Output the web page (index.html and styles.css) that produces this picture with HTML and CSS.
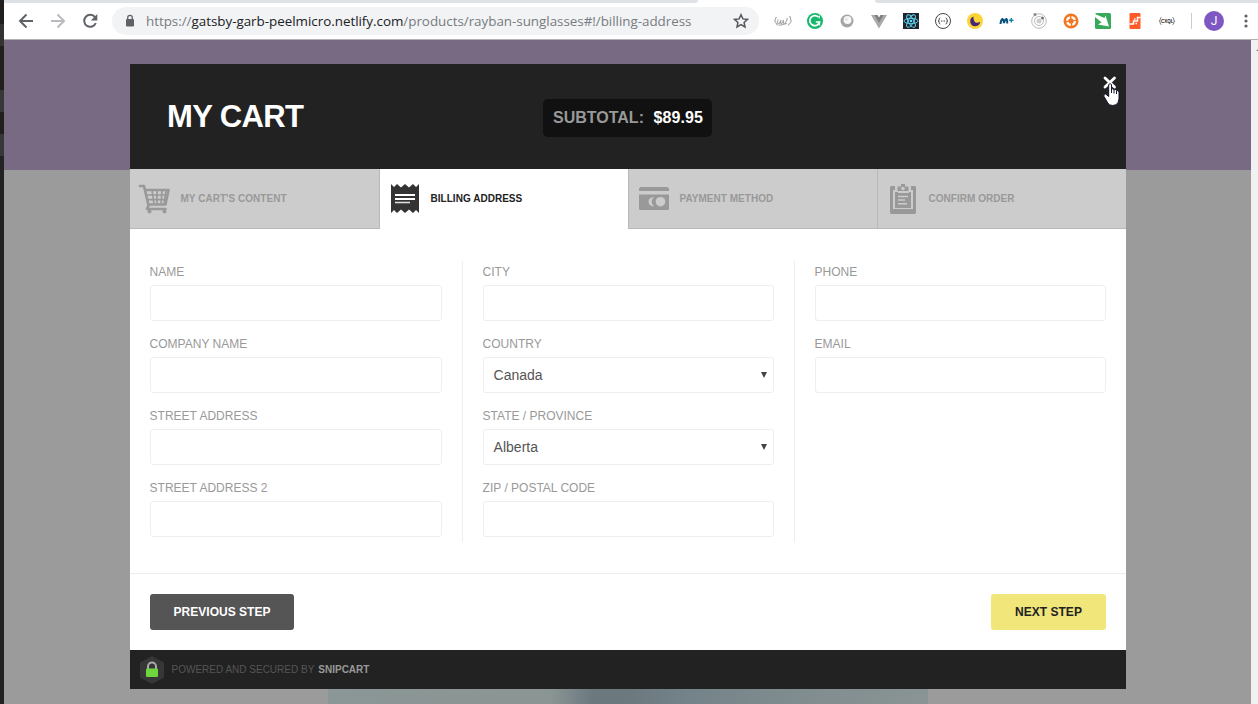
FILE: index.html
```html
<!DOCTYPE html>
<html lang="en">
<head>
<meta charset="utf-8">
<title>Billing address</title>
<link rel="stylesheet" href="styles.css">
</head>
<body>
<div class="screen">
  <div class="desktop-edge"></div>
  <div class="browser">
    <div class="tabstrip"><div class="tab-rest left"></div><div class="tab-rest right"></div></div>
    <div class="toolbar">
      <svg class="nav" width="108" height="36" viewBox="4 3 108 36" fill="none" stroke="#5f6368" stroke-width="2">
        <path d="M33 21H20.500M26.500 14.500L20 21l6.500 6.500"/>
        <path stroke="#b9bbbe" d="M51 21h12.500M57.500 14.500L64 21l-6.500 6.500"/>
        <path d="M95 17.200A6 6 0 1 0 95.800 23"/><path fill="#5f6368" stroke="none" d="M97.300 14v6.500h-6.500z"/>
      </svg>
      <div class="address">
        <svg width="10" height="14" viewBox="0 0 10 14"><rect x="1" y="5" width="8" height="7.500" rx="1" fill="#5f6368"/><path d="M2.700 5.500V3.700a2.300 2.300 0 0 1 4.600 0v1.800" fill="none" stroke="#5f6368" stroke-width="1.300"/></svg>
        <div class="url">https://<span class="host">gatsby-garb-peelmicro.netlify.com</span>/products/rayban-sunglasses#!/billing-address</div>
        <svg class="star" width="16" height="16" viewBox="0 0 16 16"><path d="M8 1.700l1.900 4.200 4.600.5-3.400 3.100.9 4.500L8 11.700 4 14l.9-4.500L1.500 6.400l4.600-.5z" fill="none" stroke="#55595e" stroke-width="1.500"/></svg>
      </div>
      <div class="extensions">
        <svg viewBox="0 0 20 20"><g fill="none" stroke="#aaa" stroke-width="1.100"><path d="M4 6.500q-2 0-1.600 2l-.7 1.500 1.100 1.500 1.700 3M16 5.500q2 0 1.500 2.500l.8 2-1.300 2-2 2.500M5 8.500q-1 5 1 4.500l2-4q-1 4 .5 4l2-4q-.5 4 1 4l2-3 1-3M6 14.500l8-2"/></g></svg>
        <svg viewBox="0 0 20 20"><circle cx="10" cy="10" r="8" fill="#15b76c"/><path d="M13.500 6.300A5 5 0 1 0 14.600 11H10.800" fill="none" stroke="#fff" stroke-width="1.700"/><path d="M14.600 10.500v4M14.300 4.500v3" stroke="#fff" stroke-width="1"/></svg>
        <svg viewBox="0 0 20 20"><circle cx="10" cy="10" r="6.500" fill="#a5a5a5"/><circle cx="10.500" cy="9" r="4" fill="#f8f8f8"/><circle cx="9.300" cy="8.200" r="1.600" fill="#e5e5e5"/></svg>
        <svg viewBox="0 0 20 20"><path d="M2 4h4.500L10 10l3.500-6H18l-8 13.500z" fill="#aaa"/><path d="M5.500 4h3L10 6.500 11.500 4h3L10 12z" fill="#808080"/></svg>
        <svg viewBox="0 0 20 20"><path fill="#20232a" d="M2 2h16v16H2z"/><g fill="none" stroke="#61dafb" stroke-width=".9"><ellipse cx="10" cy="10" rx="7" ry="2.700"/><ellipse cx="10" cy="10" rx="7" ry="2.700" transform="rotate(60 10 10)"/><ellipse cx="10" cy="10" rx="7" ry="2.700" transform="rotate(120 10 10)"/></g><circle cx="10" cy="10" r="1.300" fill="#61dafb"/></svg>
        <svg viewBox="0 0 20 20"><g fill="none" stroke="#444"><circle cx="10" cy="10" r="7.500"/><path d="M7.300 7q-1.300 0-1.100 1.500T5.100 10q1.300 0 1.100 1.500T7.300 13M12.700 7q1.300 0 1.100 1.500t1.100 1.500q-1.300 0-1.100 1.500T12.700 13"/><path d="M8 10h4" stroke-dasharray="1 .5"/></g></svg>
        <svg viewBox="0 0 20 20"><circle cx="10" cy="10" r="8" fill="#fcd535"/><path d="M8.500 5.500a5 5 0 1 0 6.700 5.300q-4 2.200-5.700-.3-1.500-2.200-1-5z" fill="#442779"/></svg>
        <svg viewBox="0 0 20 20"><path d="M3.500 13q.5-4.500 2-5 1 .5 1.500 4 1-3.800 2.500-4 1 1 .7 4.500" fill="none" stroke="#075078" stroke-width="2"/><path d="M12 9.200h4.500M14.300 7v4.400" stroke="#1687b8" stroke-width="1.400"/></svg>
        <svg viewBox="0 0 20 20"><g fill="none" stroke="#bbb"><circle cx="10" cy="10" r="7.300"/><circle cx="10" cy="10" r="4.500"/></g><circle cx="10" cy="10" r="2.500" fill="#ccc"/><circle cx="6" cy="3.500" r="1.500" fill="#888"/><circle cx="13.500" cy="7" r="1.500" fill="#777"/></svg>
        <svg viewBox="0 0 20 20"><circle cx="10" cy="10" r="7.500" fill="#f47720"/><circle cx="10" cy="10" r="3.900" fill="none" stroke="#fff" stroke-width="2.200" stroke-dasharray="4.600 1.520"/><circle cx="10" cy="10" r="1.800" fill="#f47720"/></svg>
        <svg viewBox="0 0 20 20"><rect x="2" y="2" width="16" height="16" rx="1.500" fill="#37a95b"/><path d="M2 3l9.500 4 1-2.500L16 15.500 5 13.500l3.500-2.200L2 6z" fill="#fff"/></svg>
        <svg viewBox="0 0 20 20"><rect x="4.500" y="2" width="11" height="16" rx="1" fill="#ff5a28"/><path d="M4.500 13h4v-3h4V6.500h3M9 8h1.500M10.500 12.500H12" fill="none" stroke="#fff" stroke-width="1.500"/></svg>
        <svg viewBox="0 0 20 20"><g fill="none" stroke="#777" stroke-width=".9"><path d="M4.500 6.500q-1.500 0-1.200 1.700T2 10q1.500 0 1.200 1.700t1.300 1.800M15.500 6.500q1.500 0 1.200 1.700T18 10q-1.500 0-1.200 1.700t-1.300 1.800"/></g><text class="cxl" x="4" y="11.700">CXQL</text></svg>
      </div>
      <div class="separator"></div>
      <div class="avatar">J</div>
      <svg class="dots" width="4" height="16" viewBox="0 0 4 16" fill="#5f6368"><circle cx="2" cy="3" r="1.600"/><circle cx="2" cy="8" r="1.600"/><circle cx="2" cy="13" r="1.600"/></svg>
    </div>
    <div class="viewport">
      <div class="page">
        <div class="hero"></div>
        <div class="product-photo"></div>
      </div>
      <div class="scrollbar"><svg width="7" height="20" viewBox="0 0 7 20"><path d="M5 11l4-4v4z" fill="#888"/></svg></div>
      <div class="cart">
        <header class="cart-header">
          <h1>MY CART</h1>
          <div class="subtotal"><span>SUBTOTAL:</span><b>$89.95</b></div>
        </header>
        <svg class="close" width="20" height="34" viewBox="0 0 20 34">
          <path d="M4 4l9.500 9M13.500 4l-9.500 9" stroke="#fff" stroke-width="2.800" stroke-linecap="round"/>
          <path d="M7.700 10.500q1.500-1.700 2.800 0V15q1.600-.8 2.500.7 1.800-.8 2.500.9 2-.5 2.500 1.400V25l-1 3.500q-1.500 3-5.200 3t-5-2.500L3 22.500q-1-3 1.700-2.500l3 2.500z" fill="#fff" stroke="#15152b"/>
          <path d="M10.500 15v4M13 16v3.500M15.500 17v3" stroke="#15152b" stroke-width="1"/>
        </svg>
        <nav class="steps">
          <div class="step">
            <svg width="36" height="36" viewBox="0 0 36 36"><g fill="none" stroke="#999" stroke-width="2.600" stroke-linecap="round" stroke-linejoin="round"><path d="M2 5h4l4.500 19.500M8 9h22.500l-3 14.500H11L9 28h18.500"/></g><path d="M9 14h20M10 18.700h18M14 9l2 14M19 9v14M24 9l-1 14M28 10l-2 13" stroke="#999" stroke-width="1.700"/><circle cx="11.500" cy="30.500" r="2" fill="#999"/><circle cx="26.500" cy="30.500" r="2" fill="#999"/></svg>
            <span>MY CART'S CONTENT</span>
          </div>
          <div class="step active">
            <svg width="36" height="36" viewBox="0 0 36 36"><path d="M4 3l3 3 3-3 4 3.500L18 3l4 3.500L26 3l3 3 3-3v29l-3-3-3 3-4-3.500L18 32l-4-3.500L10 32l-3-3-3 3z" fill="#333"/><path d="M8 14h20M8 18h20" stroke="#fff" stroke-width="2"/><path d="M8 21.500h15" stroke="#ddd" stroke-width="1.600"/></svg>
            <span>BILLING ADDRESS</span>
          </div>
          <div class="step">
            <svg width="36" height="36" viewBox="0 0 36 36"><path d="M2 10V7.500L3.500 6h27L32 7.500V10zM2 13.500h30V28l-1 1H3l-1-1z" fill="#999"/><path d="M17 16q-5.500.5-5.500 4.700 0 4 5.500 4.700-2.300-2-2.300-4.700T17 16" fill="#ccc"/><circle cx="23.500" cy="20.700" r="4.800" fill="#ccc"/></svg>
            <span>PAYMENT METHOD</span>
          </div>
          <div class="step">
            <svg width="36" height="36" viewBox="0 0 36 36"><path d="M5 5h4v4H7v19h20V9h-2V5h4l1 1v26l-1 1H5l-1-1V6z" fill="#999"/><path d="M9 11h3v1h11v-1h2v16H9z" fill="#999"/><path d="M11.500 10V5.500h3.500V3h4v2.500h3.500V10z" fill="#999"/><circle cx="17" cy="7.500" r="1.800" fill="#ccc"/><path d="M12 15.500h10M12 19h7M12 22.700h9" stroke="#ccc" stroke-width="1.500"/></svg>
            <span>CONFIRM ORDER</span>
          </div>
        </nav>
        <div class="form">
          <div class="column">
            <label>NAME<input type="text"></label>
            <label>COMPANY NAME<input type="text"></label>
            <label>STREET ADDRESS<input type="text"></label>
            <label>STREET ADDRESS 2<input type="text"></label>
          </div>
          <div class="column">
            <label>CITY<input type="text"></label>
            <div class="field">COUNTRY<div class="select"><span>Canada</span><i></i></div></div>
            <div class="field">STATE / PROVINCE<div class="select"><span>Alberta</span><i></i></div></div>
            <label>ZIP / POSTAL CODE<input type="text"></label>
          </div>
          <div class="column">
            <label>PHONE<input type="text"></label>
            <label>EMAIL<input type="text"></label>
          </div>
        </div>
        <div class="actions"><button class="previous">PREVIOUS STEP</button><button class="next">NEXT STEP</button></div>
        <footer class="secured">
          <svg width="26" height="28" viewBox="0 0 26 28"><path d="M13 0l12 6.500v15L13 28 1 21.500v-15z" fill="#373737"/><path d="M9 13V10.500a4 4 0 0 1 8 0V13" fill="none" stroke="#aaa" stroke-width="2"/><rect x="7" y="12.500" width="12" height="8.500" rx="1" fill="#70d63e"/></svg>
          <span>POWERED AND SECURED BY</span><b>SNIPCART</b>
        </footer>
      </div>
    </div>
  </div>
</div>
</body>
</html>
```
FILE: styles.css
```css
* { box-sizing: border-box; }
body { margin: 0; font-family: "Liberation Sans", Arial, sans-serif; }
.screen { display: flex; width: 1258px; height: 704px; overflow: hidden; }
.desktop-edge { width: 4px; background: linear-gradient(#211f1e 24px, #343332 24px 46px, #211f1e 46px 90px, #383737 90px 112px, #211f1e 112px 134px, #383737 134px 156px, #222 156px); }
.browser { width: 1254px; }
.tabstrip { display: flex; justify-content: space-between; height: 3px; background: #fff; }
.tab-rest { height: 3px; background: #dee1e6; }
.tab-rest.left { width: 694px; border-bottom-right-radius: 3px; }
.tab-rest.right { width: 383px; border-bottom-left-radius: 3px; }
.toolbar { display: flex; align-items: center; height: 37px; background: #fff; border-bottom: 1px solid #b3b1b5; }
.nav { display: block; flex: none; }
.address { display: flex; align-items: center; width: 647px; height: 28px; padding: 0 10px 0 13px; border-radius: 14px; background: #f1f3f4; }
.url { margin-left: 11px; flex: 1; white-space: nowrap; font: 13.4px/20px "Open Sans", sans-serif; letter-spacing: -.02px; color: #787b80; }
.host { color: #202124; }
.extensions { display: flex; gap: 12px; margin-left: 14px; }
.extensions svg { display: block; width: 20px; height: 20px; }
.cxl { font: bold 4.5px "Liberation Sans", sans-serif; fill: #222; }
.separator { width: 1px; height: 16px; margin-left: 14px; background: #ccc; }
.avatar { width: 20px; height: 20px; margin-left: 12px; border-radius: 50%; background: #7e57c2; color: #fff; font: 12px/20px Roboto, sans-serif; text-align: center; }
.dots { margin-left: 20px; }
.viewport { position: relative; display: flex; height: 664px; }
.page { width: 1247px; background: #9b9b9b; }
.hero { height: 130px; background: #786a82; }
.product-photo { width: 600px; height: 415px; margin: 119px 0 0 324px; background: linear-gradient(90deg, #8b9696, #8b9594 37%, #6b797f 44%, #6b797f 50%, #748389 60%, #7e8b8e 75%, #8a9494); }
.scrollbar { width: 7px; background: #f1f1f1; }
.cart { position: absolute; left: 126px; top: 24px; width: 996px; height: 625px; background: #fff; }
.cart-header { display: grid; grid-template-columns: 413px auto; justify-content: start; align-items: start; height: 105px; background: #222; color: #fff; }
h1 { margin: 35px 0 0 37px; font-size: 31px; line-height: 36px; letter-spacing: -.6px; }
.subtotal { display: flex; justify-content: space-between; width: 169px; height: 38px; margin-top: 35px; padding: 0 9px 0 10px; border-radius: 5px; background: #111; font-size: 16px; line-height: 37px; font-weight: bold; }
.subtotal b { letter-spacing: .1px; }
.subtotal span { color: #999; }
.close { position: absolute; left: 971px; top: 10px; }
.steps { display: grid; grid-template-columns: 250px 248px 249px 249px; height: 60px; }
.step { display: flex; align-items: center; padding-left: 8px; border-bottom: 1px solid #b8b8b8; background: #ccc; color: #999; font-size: 10px; font-weight: bold; letter-spacing: .03px; }
.step:first-child { border-right: 1px solid #b8b8b8; }
.step:nth-child(n+3) { border-left: 1px solid #b8b8b8; }
.step.active { background: #fff; border-color: #fff; color: #222; }
.step svg { margin-right: 6.500px; }
.step.active { padding-left: 7px; }
.step.active svg { margin-right: 7.500px; }
.form { display: flex; height: 344px; padding: 32px 0; }
.column { width: 332px; height: 281px; padding: 0 20px; }
.column + .column { border-left: 1px solid #eee; }
label, .field { display: block; height: 72px; color: #999; font-size: 12px; line-height: 22px; text-indent: -.4px; }
input, .select { display: flex; align-items: center; justify-content: space-between; width: 100%; height: 36px; margin-top: 2px; padding: 0 6px 0 10px; border: 1px solid #eee; border-radius: 3px; background: #fff; }
.select { color: #555; font-size: 14px; }
.select i { width: 0; border: 3px solid transparent; border-top: 6px solid #444; border-bottom: 0; }
.actions { display: flex; justify-content: space-between; height: 77px; padding: 20px; border-top: 1px solid #eee; }
button { height: 36px; padding: 0; border: 0; border-radius: 3px; font: bold 12px "Liberation Sans", Arial, sans-serif; letter-spacing: .02px; }
.previous { width: 144px; background: #555; color: #fff; }
.next { width: 115px; background: #f0e67a; color: #222; }
.secured { display: flex; align-items: center; height: 39px; padding-left: 9px; background: #222; color: #555; font-size: 10px; }
.secured span { margin: 0 4px 0 6.500px; }
.secured b { color: #999; }
```
